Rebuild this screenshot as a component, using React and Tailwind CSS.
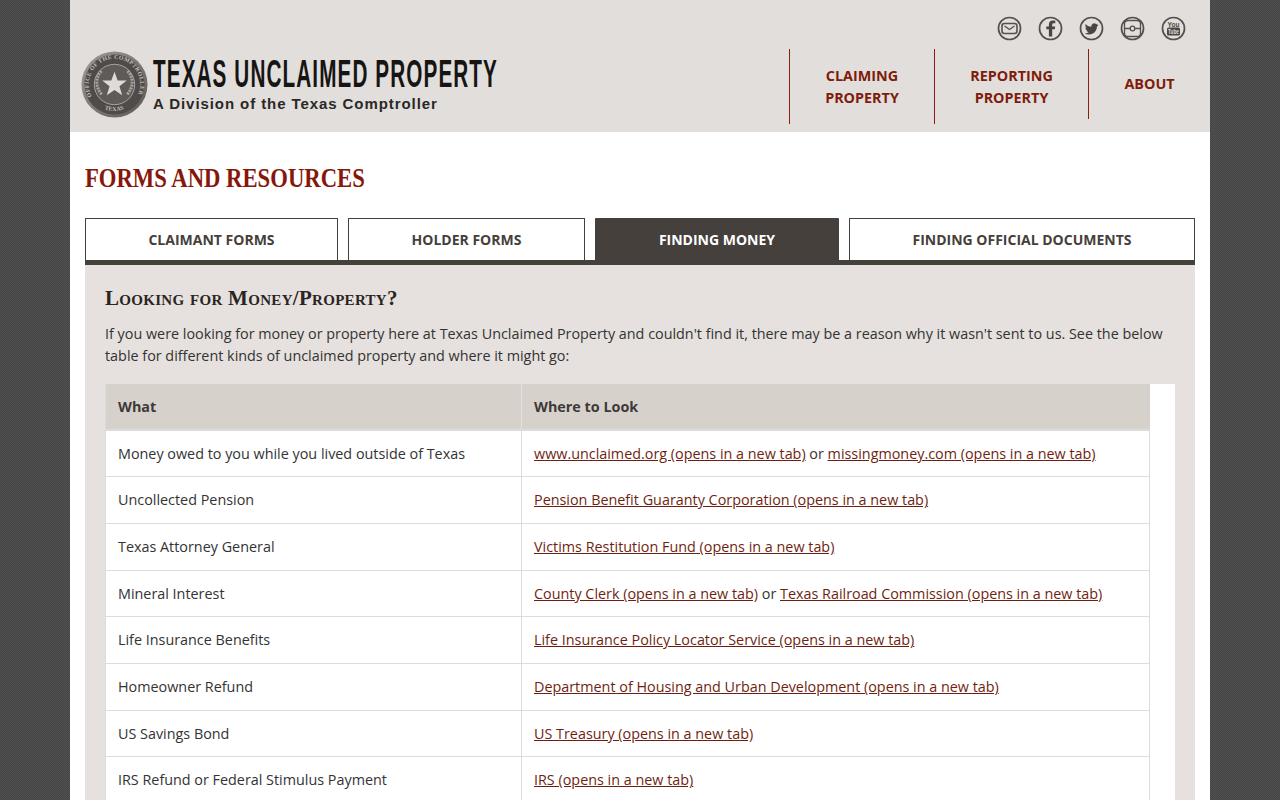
const rows = [
  ['Money owed to you while you lived outside of Texas', [['www.unclaimed.org (opens in a new tab)'], ' or ', ['missingmoney.com (opens in a new tab)']]],
  ['Uncollected Pension', [['Pension Benefit Guaranty Corporation (opens in a new tab)']]],
  ['Texas Attorney General', [['Victims Restitution Fund (opens in a new tab)']]],
  ['Mineral Interest', [['County Clerk (opens in a new tab)'], ' or ', ['Texas Railroad Commission (opens in a new tab)']]],
  ['Life Insurance Benefits', [['Life Insurance Policy Locator Service (opens in a new tab)']]],
  ['Homeowner Refund', [['Department of Housing and Urban Development (opens in a new tab)']]],
  ['US Savings Bond', [['US Treasury (opens in a new tab)']]],
  ['IRS Refund or Federal Stimulus Payment', [['IRS (opens in a new tab)']]],
];

const tabs = [
  { label: 'CLAIMANT FORMS', width: 'w-[253px]' },
  { label: 'HOLDER FORMS', width: 'w-[237px]' },
  { label: 'FINDING MONEY', width: 'w-[244px]', active: true },
  { label: 'FINDING OFFICIAL DOCUMENTS', width: 'w-[346px]' },
];

const Social = ({ children }) => (
  <a className="block w-[25px] h-[25px]">
    <svg viewBox="0 0 25 25" width="25" height="25" fill="none" stroke="#55504c">
      <circle cx="12.5" cy="12.5" r="11" strokeWidth="1.7" />
      {children}
    </svg>
  </a>
);

const Seal = () => (
  <svg viewBox="0 0 68 68" width="67" height="67" className="shrink-0">
    <defs>
      <linearGradient id="sealRim" x1="0" y1="0" x2="1" y2="1">
        <stop offset="0" stopColor="#a09c98" />
        <stop offset="1" stopColor="#5a5755" />
      </linearGradient>
      <path id="sealTop" d="M11 46A26 26 0 1 1 57 46" />
      <path id="sealBottom" d="M17 55A27.500 27.500 0 0 0 51 55" />
    </defs>
    <circle cx="34" cy="34" r="33.500" fill="url(#sealRim)" />
    <circle cx="34" cy="34" r="30.500" fill="#4e4b49" />
    <circle cx="34" cy="34" r="20.500" fill="#5f5b58" stroke="#a8a4a0" strokeWidth="1" />
    <text fontFamily="'Liberation Serif',serif" fontSize="6" fontWeight="700" fill="#c4c0bc">
      <textPath href="#sealTop" textLength="104">OFFICE OF THE COMPTROLLER</textPath>
    </text>
    <text fontFamily="'Liberation Serif',serif" fontSize="6" fontWeight="700" fill="#c4c0bc">
      <textPath href="#sealBottom" startOffset="8">TEXAS</textPath>
    </text>
    <path d="M21 44C14 36 15 26 21 20M47 44C54 36 53 26 47 20" fill="none" stroke="#a8a4a0" strokeWidth="3" strokeDasharray="2 1" />
    <polygon points="34,21 37.200,30 46.500,30 39,35.800 41.800,45 34,39.500 26.200,45 29,35.800 21.500,30 30.800,30" fill="#dedbd8" />
  </svg>
);

export default function App() {
  return (
    <div className="h-[800px] overflow-hidden bg-[#4a4a4a] bg-[conic-gradient(#464646_25%,#4f4f4f_0_50%,#464646_0_75%,#4f4f4f_0)] bg-[length:2px_2px] font-['Open_Sans',sans-serif] text-[14.37px] text-[#333]">
      <div className="w-[1140px] mx-auto bg-white">
        <header className="h-[132px] bg-[#e2dedb] flex justify-between">
          <div className="flex items-center pl-[11px] pt-[36px] gap-[4px]">
            <Seal />
            <svg viewBox="0 0 352 72" width="352" height="72" className="shrink-0">
              <text transform="scale(1 2)" x="1" y="19.750" textLength="345" lengthAdjust="spacingAndGlyphs" fontFamily="'Liberation Sans Narrow','Liberation Sans',sans-serif" fontWeight="700" fontSize="19" letterSpacing="1" fill="#161514">TEXAS UNCLAIMED PROPERTY</text>
              <text x="1" y="61" fontFamily="'Liberation Sans',sans-serif" fontWeight="700" fontSize="15" letterSpacing="0.920" fill="#2a2826">A Division of the Texas Comptroller</text>
            </svg>
          </div>
          <div className="flex flex-col items-end">
            <div className="flex gap-4 pr-[24px] pt-[16px] h-[49px]">
              <Social>
                <rect x="5" y="7.500" width="15" height="10" rx="2.500" strokeWidth="1.600" />
                <path d="M7.500 10l5 3.500 5-3.500" strokeWidth="1.400" />
              </Social>
              <Social>
                <path d="M14.200 20.500v-7.300h2.600l.4-2.800h-3V8.600c0-.8.3-1.400 1.400-1.400h1.700V4.700c-.3 0-1.300-.1-2.400-.1-2.400 0-4 1.400-4 4v1.800H8.300v2.800h2.600v7.300z" fill="#4a4540" stroke="none" />
              </Social>
              <Social>
                <path d="M19.300 8.700c-.5.2-1 .4-1.600.4.600-.3 1-.8 1.200-1.500-.5.3-1.100.5-1.700.7a2.800 2.800 0 0 0-4.800 2.500C10 10.700 8 9.700 6.700 8c-.7 1.300-.3 2.900.9 3.700-.4 0-.9-.1-1.300-.3 0 1.300 1 2.500 2.300 2.800-.4.1-.9.1-1.300 0 .4 1.100 1.400 1.900 2.600 1.900a5.700 5.700 0 0 1-4.200 1.200c4.800 3 11.900.6 12.300-6.700.5-.4 1-.9 1.300-1.900z" fill="#4a4540" stroke="none" />
              </Social>
              <Social>
                <rect x="4.500" y="4.500" width="16" height="16" rx="3.500" strokeWidth="1.300" />
                <path d="M4.500 12.500h5.500M15 12.500h5.500" strokeWidth="1.300" />
                <circle cx="12.500" cy="12.500" r="2.300" strokeWidth="1.300" />
              </Social>
              <Social>
                <text x="12.500" y="10.500" textAnchor="middle" fontFamily="'Liberation Sans Narrow','Liberation Sans',sans-serif" fontWeight="700" fontSize="6.500" fill="#4a4540" stroke="none">You</text>
                <rect x="6" y="11.500" width="13" height="8" rx="1.500" fill="#4a4540" stroke="none" />
                <text x="12.500" y="18" textAnchor="middle" textLength="11" lengthAdjust="spacingAndGlyphs" fontFamily="'Liberation Sans',sans-serif" fontWeight="700" fontSize="6.500" fill="#e2dedb" stroke="none">Tube</text>
              </Social>
            </div>
            <nav className="flex items-start font-bold leading-[22px] text-[#7e1c0c] text-center">
              <a className="w-[145px] h-[75px] border-l border-[#8a1e10] pt-[16px]">CLAIMING<br />PROPERTY</a>
              <a className="w-[154px] h-[75px] border-l border-[#8a1e10] pt-[16px]">REPORTING<br />PROPERTY</a>
              <a className="w-[122px] h-[70px] border-l border-[#8a1e10] pt-[24px] flex justify-center">ABOUT</a>
            </nav>
          </div>
        </header>

        <main className="px-[15px] pt-[29px]">
          <h1 className="font-['Liberation_Serif',serif] font-bold text-[27px] leading-[34px] text-[#85180a] mb-[23px] origin-left scale-x-[0.84]">FORMS AND RESOURCES</h1>

          <div className="flex justify-between h-[47px] border-b-[5px] border-[#45403c] text-[14px]">
            {tabs.map((tab) => (
              <a
                key={tab.label}
                className={tab.active
                  ? `${tab.width} h-[42px] bg-[#45403c] text-white font-bold flex items-center justify-center rounded-t-[1px]`
                  : `${tab.width} h-[42px] bg-white border border-b-0 border-[#45403c] text-[#45403c] font-bold flex items-center justify-center rounded-t-[1px]`}
              >
                {tab.label}
              </a>
            ))}
          </div>

          <section className="bg-[#e6e1de] px-[20px] pt-[19px]">
            <h2 className="font-['Liberation_Serif',serif] font-bold [font-variant:small-caps] text-[21px] leading-[28px] text-[#2a2522] tracking-[0.3px] mb-[11px]">Looking for Money/Property?</h2>
            <p className="leading-[22px] text-[#333] mb-[17px]">
              If you were looking for money or property here at Texas Unclaimed Property and couldn't find it, there may be a reason why it wasn't sent to us. See the below table for different kinds of unclaimed property and where it might go:
            </p>
            <div className="bg-white">
              <table className="w-[1045px] border-collapse table-fixed">
                <thead>
                  <tr className="bg-[#d7d1cc] text-left font-bold text-[#3d3a38] border-b-[2px] border-[#dcdcdc]">
                    <th className="w-[416px] h-[46px] pl-[12px] border-l border-[#dcdcdc]">What</th>
                    <th className="pl-[12px] border-l border-[#e6e1de]">Where to Look</th>
                  </tr>
                </thead>
                <tbody>
                  {rows.map(([what, where]) => (
                    <tr key={what} className="h-[46.7px] border-b border-[#dcdcdc]">
                      <td className="pl-[12px] border-l border-[#dcdcdc]">{what}</td>
                      <td className="pl-[12px] border-x border-[#dcdcdc]">
                        {where.map((part, i) =>
                          typeof part === 'string'
                            ? <span key={i}>{part}</span>
                            : <a key={i} className="underline text-[#6f1f12]">{part[0]}</a>
                        )}
                      </td>
                    </tr>
                  ))}
                </tbody>
              </table>
            </div>
          </section>
        </main>
      </div>
    </div>
  );
}
